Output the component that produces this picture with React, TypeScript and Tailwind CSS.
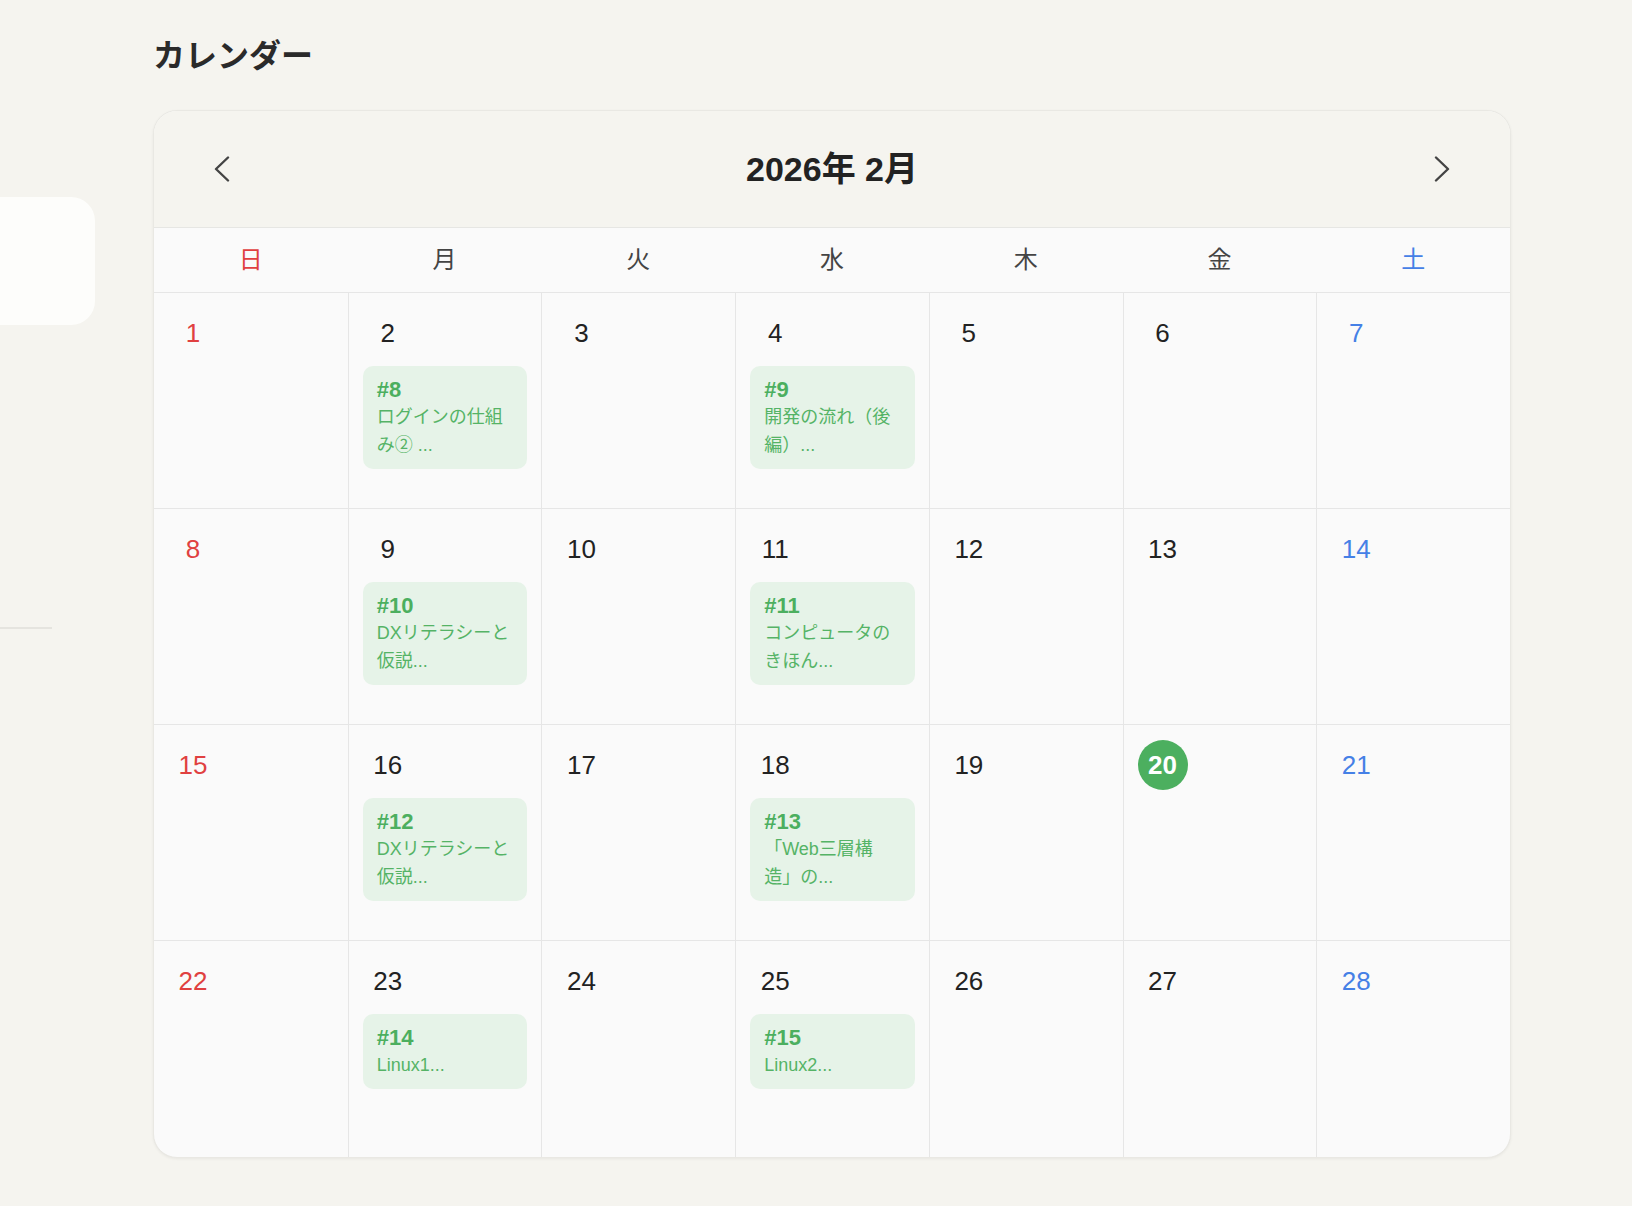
import React from "react";

type Ev = { no: number; title: string };

const events: Record<number, Ev> = {
  2: { no: 8, title: "ログインの仕組み② ..." },
  4: { no: 9, title: "開発の流れ（後編）..." },
  9: { no: 10, title: "DXリテラシーと仮説..." },
  11: { no: 11, title: "コンピュータのきほん..." },
  16: { no: 12, title: "DXリテラシーと仮説..." },
  18: { no: 13, title: "「Web三層構造」の..." },
  23: { no: 14, title: "Linux1..." },
  25: { no: 15, title: "Linux2..." },
};

const weekdays = ["日", "月", "火", "水", "木", "金", "土"];
const TODAY = 20;

function Chevron({ dir }: { dir: "left" | "right" }) {
  return (
    <svg width="16" height="26" viewBox="0 0 16 26" fill="none">
      <polyline
        points={dir === "left" ? "14,1.5 2,13 14,24.5" : "2,1.5 14,13 2,24.5"}
        stroke="#444444"
        strokeWidth="2.4"
        strokeLinecap="round"
        strokeLinejoin="round"
      />
    </svg>
  );
}

function DayCell({ day, col }: { day: number; col: number }) {
  const ev = events[day];
  const isToday = day === TODAY;
  const color =
    col === 0 ? "text-[#e04040]" : col === 6 ? "text-[#4580e6]" : "text-[#222222]";
  return (
    <div
      className={`flex flex-col px-[14px] pt-[15px] ${col > 0 ? "border-l border-[#e6e6e6]" : ""}`}
    >
      <div
        className={`flex h-[50px] w-[50px] items-center justify-center rounded-full text-[26px] leading-none ${
          isToday ? "bg-[#4caf5f] font-bold text-white" : color
        }`}
      >
        {day}
      </div>
      {ev && (
        <div className="mt-[8px] rounded-[10px] bg-[#e6f3e8] px-[14px] py-[10px]">
          <div className="text-[22px] font-bold leading-[27px] text-[#4caf5f]">#{ev.no}</div>
          <div className="text-[18px] leading-[28px] text-[#55b366] [text-spacing-trim:space-all]">
            {ev.title}
          </div>
        </div>
      )}
    </div>
  );
}

export default function App() {
  const weeks = [0, 1, 2, 3].map((w) => [0, 1, 2, 3, 4, 5, 6].map((d) => w * 7 + d + 1));
  return (
    <div
      className="relative min-h-screen overflow-hidden bg-[#f5f4ef] [text-spacing-trim:space-all]"
      style={{ fontFamily: '"Liberation Sans", "Noto Sans CJK JP", sans-serif' }}
    >
      {/* off-screen sidebar remnants */}
      <div className="absolute left-[-100px] top-[197px] h-[128px] w-[195px] rounded-[24px] bg-[#fdfdfb]" />
      <div className="absolute left-0 top-[627px] h-[2px] w-[52px] bg-[#e5e4df]" />

      <div className="ml-[153px] w-[1358px] pt-[33px]">
        <h1 className="text-[32px] font-bold leading-[46px] text-[#2a2a2a]">カレンダー</h1>

        <div className="mt-[31px] overflow-hidden rounded-[24px] border border-[#e9e8e3] bg-[#fafafa] shadow-[0_1px_3px_rgba(0,0,0,0.06)]">
          <div className="flex h-[117px] items-center justify-between border-b border-[#e6e6e3] bg-[#f5f4ef] px-[52px]">
            <button className="flex h-[40px] w-[32px] items-center justify-center">
              <Chevron dir="left" />
            </button>
            <div className="text-[34px] font-bold text-[#222222]">2026年 2月</div>
            <button className="flex h-[40px] w-[32px] items-center justify-center">
              <Chevron dir="right" />
            </button>
          </div>

          <div className="grid h-[65px] grid-cols-7 items-center border-b border-[#e6e6e6] bg-[#fafafa]">
            {weekdays.map((w, i) => (
              <div
                key={w}
                className={`text-center text-[24px] ${
                  i === 0 ? "text-[#e04040]" : i === 6 ? "text-[#4580e6]" : "text-[#444444]"
                }`}
              >
                {w}
              </div>
            ))}
          </div>

          {weeks.map((week, wi) => (
            <div
              key={wi}
              className={`grid h-[216px] grid-cols-7 ${wi < 3 ? "border-b border-[#e6e6e6]" : ""}`}
            >
              {week.map((day, ci) => (
                <DayCell key={day} day={day} col={ci} />
              ))}
            </div>
          ))}
        </div>
      </div>
    </div>
  );
}
